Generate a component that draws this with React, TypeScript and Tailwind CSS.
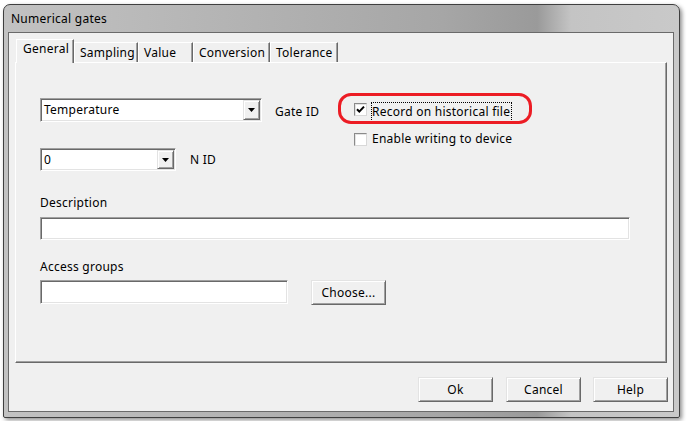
import React from "react";

const sunken =
  "border border-t-[#a0a0a0] border-l-[#a0a0a0] border-b-white border-r-white shadow-[inset_1px_1px_0_#696969,inset_-1px_-1px_0_#e3e3e3] bg-white";
const raised =
  "border border-t-[#e3e3e3] border-l-[#e3e3e3] border-b-[#696969] border-r-[#696969] shadow-[inset_1px_1px_0_#ffffff,inset_-1px_-1px_0_#a0a0a0] bg-[#f0f0f0]";

function DropButton() {
  return (
    <div className={`${raised} w-[17px] flex items-center justify-center`}>
      <svg width="7" height="4" viewBox="0 0 7 4">
        <polygon points="0,0 7,0 3.5,4" fill="#000" />
      </svg>
    </div>
  );
}

function Combo({ className, value }: { className: string; value: string }) {
  return (
    <div className={`${sunken} ${className} flex items-stretch p-[1px]`}>
      <div className="flex-1 flex items-center pl-[2px] leading-[16px]">{value}</div>
      <DropButton />
    </div>
  );
}

function CheckBox({ checked }: { checked?: boolean }) {
  return (
    <div className="w-[13px] h-[13px] border border-t-[#8a8a8a] border-l-[#8a8a8a] border-b-[#d8d8d8] border-r-[#d8d8d8] bg-white shadow-[inset_1px_1px_0_#e4e4e4] flex items-center justify-center shrink-0">
      {checked && (
        <svg width="11" height="11" viewBox="0 0 11 11">
          <path d="M2 5.2 L4.3 7.6 L9 2.6" stroke="#000" strokeWidth="2" fill="none" />
        </svg>
      )}
    </div>
  );
}

function Tab({ label, className, selected }: { label: string; className: string; selected?: boolean }) {
  return (
    <div
      className={`${className} ${
        selected ? "h-[24px] -mb-[1px] z-10 pt-[1px] pl-[6px]" : "h-[20px] pt-[2px] pl-[5px]"
      } relative bg-[#f0f0f0] border-t border-l border-r border-t-white border-l-white border-r-[#696969] shadow-[inset_-1px_0_0_#a0a0a0] leading-[16px] whitespace-nowrap`}
    >
      {label}
    </div>
  );
}

export default function App() {
  return (
    <div className="w-[687px] h-[421px] bg-white overflow-hidden pl-[3px] pt-[4px] font-['Noto_Sans',sans-serif] text-[12px] tracking-[0.25px] text-black">
      <div className="w-[677px] h-[414px] rounded-t-[7px] rounded-b-[2px] border border-[#3f3f3f] bg-[linear-gradient(90deg,#c2c2c2_0%,#b3b3b3_35%,#a6a6a6_65%,#9a9a9a_79%,#c4c4c4_84%,#c9c9c9_100%)] shadow-[2px_2px_4px_rgba(0,0,0,0.45)] flex flex-col pl-[4px] pr-[5px] pb-[5px]">
        <div className="h-[27px] flex items-center pl-[3px] leading-[16px]">Numerical gates</div>
        <div className="flex-1 border border-[#6a6a6a] bg-[#f0f0f0] flex flex-col pt-[6px] pl-[6px] pr-[6px]">
          {/* tabs */}
          <div className="flex items-end h-[23px] pl-[1px]">
            <Tab label="General" className="w-[58px]" selected />
            <Tab label="Sampling" className="w-[64px]" />
            <Tab label="Value" className="w-[55px]" />
            <Tab label="Conversion" className="w-[77px]" />
            <Tab label="Tolerance" className="w-[68px]" />
          </div>
          {/* panel */}
          <div className="h-[301px] border border-t-white border-l-white border-r-[#696969] border-b-[#696969] shadow-[inset_-1px_-1px_0_#a0a0a0] pl-[24px] pt-[35px] flex flex-col">
            <div className="flex">
              <div className="w-[314px] flex flex-col">
                <div className="flex items-center">
                  <Combo className="w-[222px] h-[24px]" value="Temperature" />
                  <div className="ml-[13px] pt-[3px] leading-[16px]">Gate ID</div>
                </div>
                <div className="flex items-center mt-[26px]">
                  <Combo className="w-[136px] h-[23px]" value="0" />
                  <div className="ml-[14px] leading-[16px]">N ID</div>
                </div>
              </div>
              <div className="relative flex flex-col">
                <div className="absolute left-[-16px] top-[-5px] w-[194px] h-[31px] border-[3px] border-[#ec1c24] rounded-[13px] pointer-events-none" />
                <div className="flex items-start mt-[4px]">
                  <div className="mt-[1px]">
                    <CheckBox checked />
                  </div>
                  <div className="ml-[4px] border border-dotted border-black pr-[1px] leading-[18px]">
                    Record on historical file
                  </div>
                </div>
                <div className="flex items-center mt-[9px]">
                  <CheckBox />
                  <div className="ml-[5px] leading-[16px]">Enable writing to device</div>
                </div>
              </div>
            </div>
            <div className="mt-[24px] leading-[16px]">Description</div>
            <div className={`${sunken} w-[590px] h-[23px] mt-[6px]`} />
            <div className="mt-[19px] leading-[16px]">Access groups</div>
            <div className="flex items-start mt-[5px]">
              <div className={`${sunken} w-[248px] h-[24px]`} />
              <div className={`${raised} ml-[23px] w-[75px] h-[25px] flex items-center justify-center leading-[16px]`}>
                Choose...
              </div>
            </div>
          </div>
          {/* buttons */}
          <div className="flex justify-end gap-[12px] mt-[14px] -mr-[1px]">
            <div className={`${raised} w-[75px] h-[25px] flex items-center justify-center leading-[16px] mr-[1px]`}>Ok</div>
            <div className={`${raised} w-[75px] h-[25px] flex items-center justify-center leading-[16px]`}>Cancel</div>
            <div className={`${raised} w-[75px] h-[25px] flex items-center justify-center leading-[16px]`}>Help</div>
          </div>
        </div>
      </div>
    </div>
  );
}
